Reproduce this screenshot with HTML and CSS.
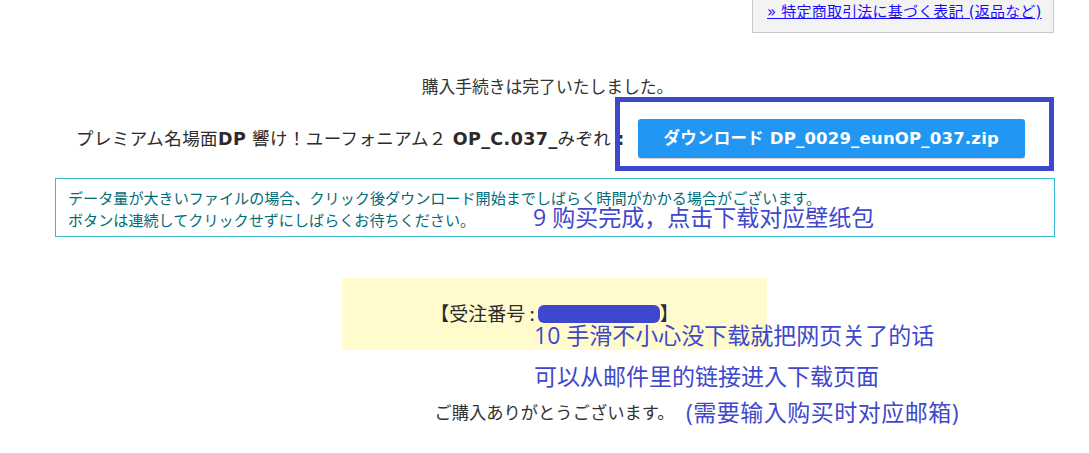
FILE: index.html
```html
<!DOCTYPE html>
<html lang="ja">
<head>
<meta charset="utf-8">
<title>購入完了</title>
<link rel="stylesheet" href="styles.css">
</head>
<body>
<div class="page">
  <header class="top">
    <div class="legal"><a href="#">» 特定商取引法に基づく表記 (返品など)</a></div>
  </header>

  <p class="done">購入手続きは完了いたしました。</p>

  <div class="product">
    <span class="name">プレミアム名場面<b>DP</b> 響け！ユーフォニアム２ <b>OP_C.037_</b>みぞれ <b>:</b></span>
    <a class="btn" href="#">ダウンロード DP_0029_eunOP_037.zip</a>
  </div>

  <div class="notice">
    <p>データ量が大きいファイルの場合、クリック後ダウンロード開始までしばらく時間がかかる場合がございます。</p>
    <p>ボタンは連続してクリックせずにしばらくお待ちください。</p>
  </div>

  <div class="order">
    <div class="order-box">【受注番号 :<span class="redact">000000000</span>】</div>
    <p class="thanks">ご購入ありがとうございます。</p>
  </div>

  <div class="mark-rect"></div>
  <div class="note note-9">9 购买完成，点击下载对应壁纸包</div>
  <div class="note note-10a">10 手滑不小心没下载就把网页关了的话</div>
  <div class="note note-10b">可以从邮件里的链接进入下载页面</div>
  <div class="note note-10c">(需要输入购买时对应邮箱)</div>
</div>
</body>
</html>
```

FILE: styles.css
```css
html, body {
  margin: 0;
  padding: 0;
  background: #fff;
}

body {
  font-family: "DejaVu Sans", "Noto Sans CJK JP", sans-serif;
  color: #333;
}

.page {
  position: relative;
  width: 1089px;
  height: 453px;
  overflow: hidden;
}

.top {
  display: flex;
  justify-content: flex-end;
  padding-right: 35px;
}

.legal {
  width: 286px;
  height: 32px;
  padding-left: 14px;
  background: #f3f3f3;
  border: 1px solid #c8c8c8;
  border-top: none;
  font-size: 15px;
  line-height: 24px;
}

.legal a {
  color: #1a0dff;
  text-decoration: underline;
  letter-spacing: 0.2px;
}

.done {
  margin: 41px 0 0;
  text-align: center;
  font-family: "Noto Sans CJK JP", sans-serif;
  font-size: 16.8px;
  line-height: 24px;
  padding-left: 6px;
}

.product {
  margin-top: 21px;
  display: flex;
  justify-content: center;
  align-items: center;
  gap: 13px;
  padding-left: 12px;
}

.name {
  font-size: 17.5px;
  letter-spacing: 0.4px;
  line-height: 24px;
  color: #2e2a2a;
  white-space: nowrap;
}

.name b {
  font-weight: 700;
}

.btn {
  display: block;
  height: 39px;
  line-height: 39px;
  padding: 0 26px;
  background: #2196f3;
  border-radius: 3px;
  box-shadow: 0 1px 1px rgba(0, 0, 0, 0.2);
  color: #fff;
  font-weight: 700;
  font-size: 16.5px;
  letter-spacing: 0.2px;
  text-decoration: none;
  white-space: nowrap;
}

.notice {
  margin: 20px 34px 0 55px;
  padding: 7px 12px 0;
  box-sizing: border-box;
  height: 59px;
  border: 1px solid #3cb9d3;
  color: #006c78;
  font-family: "Noto Sans CJK JP", sans-serif;
  font-size: 15.1px;
  line-height: 22px;
}

.notice p {
  margin: 0;
}

.order {
  margin: 41px 0 0 342px;
  width: 425px;
}

.order-box {
  height: 72px;
  box-sizing: border-box;
  padding-top: 20px;
  background: #fffbcc;
  text-align: center;
  font-family: "Noto Sans CJK JP", sans-serif;
  font-size: 19px;
  line-height: 30px;
  color: #2b2b2b;
}

.redact {
  display: inline-block;
  width: 122px;
  height: 18px;
  margin-left: 3px;
  vertical-align: -2px;
  border-radius: 6px;
  background: #3f48cc;
  color: transparent;
  overflow: hidden;
  font-size: 10px;
  line-height: 18px;
}

.thanks {
  margin: 50px 0 0;
  text-align: center;
  font-family: "Noto Sans CJK JP", sans-serif;
  font-size: 17.3px;
  line-height: 24px;
  color: #333;
}

.mark-rect {
  position: absolute;
  left: 615px;
  top: 97px;
  width: 429px;
  height: 64px;
  border: 5px solid #3f48cc;
}

.note {
  position: absolute;
  font-family: "Open Sans", "Noto Sans CJK SC", sans-serif;
  font-size: 23px;
  line-height: 30px;
  color: #3f48cc;
  white-space: nowrap;
}

.note-9 { left: 533px; top: 202px; }
.note-10a { left: 534px; top: 320px; }
.note-10b { left: 534px; top: 361px; }
.note-10c { left: 686px; top: 397px; letter-spacing: 0.5px; }
```
